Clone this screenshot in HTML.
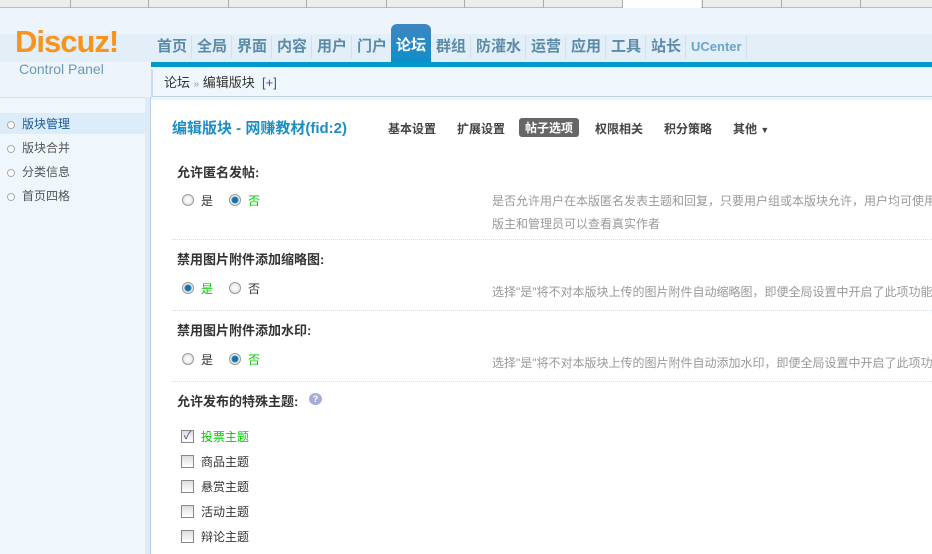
<!DOCTYPE html>
<html><head><meta charset="utf-8">
<style>
*{margin:0;padding:0;box-sizing:border-box}
body{width:932px;height:554px;overflow:hidden;background:#fff;font-family:"Liberation Sans","Noto Sans CJK SC",sans-serif;font-size:12px;color:#333;position:relative}
.a{position:absolute;white-space:nowrap}
.tabs{left:0;top:0;width:932px;height:8px;background:#ececec;border-bottom:1px solid #bbb}
.tabs i{position:absolute;top:0;width:1px;height:8px;background:#aaa}
.hdr{left:0;top:8px;width:932px;height:92px;background:#edf4fb}
.band{left:0;top:34px;width:932px;height:28px;background:#e2eef8}
.nav{top:36px;font-size:15px;color:#5b8ba6;font-weight:bold;height:22px;line-height:22px;padding:0 4px;border-right:1px solid #d0e0ec}
.act{left:391px;top:24px;width:40px;height:42px;background:linear-gradient(#3f86c0,#0a8fcc);border-radius:6px 6px 0 0;color:#fff;font-size:15px;font-weight:bold;text-align:center;line-height:44px}
.bar{left:151px;top:62px;width:781px;height:5px;background:#0099cc}
.crumb{left:151px;top:69px;width:781px;height:28px;background:#f0f7fc;border-left:2px solid #c8dcea;border-bottom:1px solid #c0d4e2;padding-left:11px;line-height:28px;font-size:13px;color:#333}
.side{left:0;top:97px;width:145px;height:457px;background:#f0f7fc;border-top:1px solid #d0e0ec}
.sl{left:145px;top:97px;width:6px;height:457px;background:#deebf6;border-right:1px solid #b8cfdf}
.si{left:0;width:145px;height:21px;line-height:21px;padding-left:22px;font-size:12px;color:#555}
.si:before{content:"";position:absolute;left:7px;top:7px;width:6px;height:6px;border:1px solid #aaa;border-radius:50%;background:#fff}
.lbl{left:177px;font-weight:bold;font-size:13px;color:#333}
.desc{left:492px;color:#999;font-size:12px;line-height:23px}
.sep{left:172px;width:760px;border-top:1px dotted #cfe0ec}
.rad{width:12px;height:12px;border-radius:50%;border:1px solid #999;background:radial-gradient(#fff,#ddd)}
.rad.on{background:radial-gradient(#1b6fa8 30%,#2a8cc8 45%,#eee 55%)}
.cb{left:181px;width:13px;height:13px;border:1px solid #888;background:linear-gradient(#ddd,#fff)}
.ct{left:201px;font-size:12px;color:#333}
.tb{top:120px;font-size:12px;font-weight:bold;color:#444}
</style></head><body>
<div class="a tabs"><i style="left:70px"></i><i style="left:148px"></i><i style="left:228px"></i><i style="left:306px"></i><i style="left:386px"></i><i style="left:464px"></i><i style="left:543px"></i><i style="left:622px"></i><i style="left:702px"></i><i style="left:781px"></i><i style="left:860px"></i>
<div style="position:absolute;left:623px;top:0;width:78px;height:9px;background:#fff"></div></div>
<div class="a hdr"></div>
<div class="a band"></div>
<div class="a" style="left:15px;top:24px;font-size:31px;font-weight:bold;color:#f7941d;letter-spacing:-1px">Discuz!</div>
<div class="a" style="left:19px;top:61px;font-size:14px;color:#6a9ab6">Control Panel</div>
<div class="a nav" style="left:153px">首页</div>
<div class="a nav" style="left:193px">全局</div>
<div class="a nav" style="left:233px">界面</div>
<div class="a nav" style="left:273px">内容</div>
<div class="a nav" style="left:313px">用户</div>
<div class="a nav" style="left:353px">门户</div>
<div class="a act">论坛</div>
<div class="a nav" style="left:432px">群组</div>
<div class="a nav" style="left:472px">防灌水</div>
<div class="a nav" style="left:527px">运营</div>
<div class="a nav" style="left:567px">应用</div>
<div class="a nav" style="left:607px">工具</div>
<div class="a nav" style="left:647px">站长</div>
<div class="a nav" style="left:687px;font-size:13px;color:#6aa4c8">UCenter</div>
<div class="a bar"></div>
<div class="a crumb">论坛 <span style="color:#999;font-size:10px">»</span> 编辑版块 &nbsp;<span style="color:#3355aa">[+]</span></div>
<div class="a side"></div>
<div class="a sl"></div>
<div class="a" style="left:0;top:113px;width:145px;height:21px;background:#dcecf8"></div>
<div class="a si" style="top:114px;color:#1a5a9a">版块管理</div>
<div class="a si" style="top:138px">版块合并</div>
<div class="a si" style="top:162px">分类信息</div>
<div class="a si" style="top:186px">首页四格</div>

<div class="a" style="left:172px;top:117px;font-size:15px;font-weight:bold;color:#1b8ec6">编辑版块 - 网赚教材(fid:2)</div>
<div class="a tb" style="left:388px">基本设置</div>
<div class="a tb" style="left:457px">扩展设置</div>
<div class="a tb" style="left:519px;top:118px;background:#666;color:#fff;border-radius:3px;padding:1px 6px">帖子选项</div>
<div class="a tb" style="left:595px">权限相关</div>
<div class="a tb" style="left:664px">积分策略</div>
<div class="a tb" style="left:733px">其他 <span style="font-size:9px">▼</span></div>

<div class="a lbl" style="top:162px">允许匿名发帖:</div>
<div class="a rad" style="left:182px;top:194px"></div><div class="a ct" style="top:192px;left:201px">是</div>
<div class="a rad on" style="left:229px;top:194px"></div><div class="a ct" style="top:192px;left:248px;color:#00cc00">否</div>
<div class="a desc" style="top:190px">是否允许用户在本版匿名发表主题和回复，只要用户组或本版块允许，用户均可使用<br>版主和管理员可以查看真实作者</div>
<div class="a sep" style="top:239px"></div>

<div class="a lbl" style="top:249px">禁用图片附件添加缩略图:</div>
<div class="a rad on" style="left:182px;top:282px"></div><div class="a ct" style="top:280px;left:201px;color:#00cc00">是</div>
<div class="a rad" style="left:229px;top:282px"></div><div class="a ct" style="top:280px;left:248px">否</div>
<div class="a desc" style="top:281px">选择"是"将不对本版块上传的图片附件自动缩略图，即便全局设置中开启了此项功能</div>
<div class="a sep" style="top:310px"></div>

<div class="a lbl" style="top:320px">禁用图片附件添加水印:</div>
<div class="a rad" style="left:182px;top:353px"></div><div class="a ct" style="top:351px;left:201px">是</div>
<div class="a rad on" style="left:229px;top:353px"></div><div class="a ct" style="top:351px;left:248px;color:#00cc00">否</div>
<div class="a desc" style="top:352px">选择"是"将不对本版块上传的图片附件自动添加水印，即便全局设置中开启了此项功</div>
<div class="a sep" style="top:381px"></div>

<div class="a lbl" style="top:391px">允许发布的特殊主题:</div>
<div class="a" style="left:309px;top:393px;width:13px;height:12px;border-radius:50%;background:#a8acd8;color:#fff;font-size:9px;font-weight:bold;text-align:center;line-height:12px">?</div>
<div class="a cb" style="top:430px;font-size:11px;line-height:11px;color:#3a4a9a;text-align:center">✓</div><div class="a ct" style="top:428px;color:#00cc00">投票主题</div>
<div class="a cb" style="top:455px"></div><div class="a ct" style="top:453px">商品主题</div>
<div class="a cb" style="top:480px"></div><div class="a ct" style="top:478px">悬赏主题</div>
<div class="a cb" style="top:505px"></div><div class="a ct" style="top:503px">活动主题</div>
<div class="a cb" style="top:530px"></div><div class="a ct" style="top:528px">辩论主题</div>
</body></html>
